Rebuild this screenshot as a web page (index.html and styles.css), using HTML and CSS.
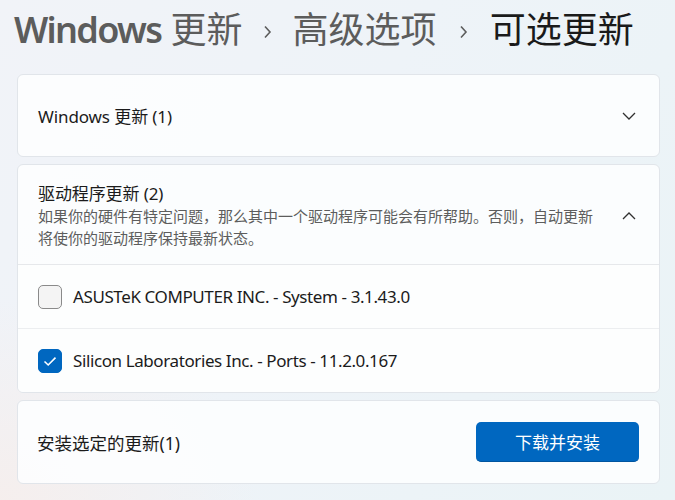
FILE: index.html
```html
<!DOCTYPE html>
<html lang="zh-CN">
<head>
<meta charset="utf-8">
<title>可选更新</title>
<link rel="stylesheet" href="styles.css">
</head>
<body>
<div class="page">
  <h1 class="crumbs">
    <span class="crumb"><span class="latin">Windows</span> 更新</span>
    <svg class="sep" width="9" height="14" viewBox="0 0 9 14"><path d="M2 1.5 L7 7 L2 12.5" fill="none" stroke="#5c5c5c" stroke-width="1.6"/></svg>
    <span class="crumb">高级选项</span>
    <svg class="sep" width="9" height="14" viewBox="0 0 9 14"><path d="M2 1.5 L7 7 L2 12.5" fill="none" stroke="#5c5c5c" stroke-width="1.6"/></svg>
    <span class="crumb current">可选更新</span>
  </h1>

  <div class="cards">
    <section class="card">
      <div class="exp-head single">
        <div class="exp-text">
          <div class="exp-title">Windows 更新 (1)</div>
        </div>
        <svg class="chev" width="14" height="8" viewBox="0 0 14 8"><path d="M1 1 L7 7 L13 1" fill="none" stroke="#303030" stroke-width="1.3"/></svg>
      </div>
    </section>

    <section class="card">
      <div class="exp-head">
        <div class="exp-text">
          <div class="exp-title">驱动程序更新 (2)</div>
          <div class="exp-desc">如果你的硬件有特定问题，那么其中一个驱动程序可能会有所帮助。否则，自动更新<br>将使你的驱动程序保持最新状态。</div>
        </div>
        <svg class="chev" width="14" height="8" viewBox="0 0 14 8"><path d="M1 7 L7 1 L13 7" fill="none" stroke="#303030" stroke-width="1.3"/></svg>
      </div>
      <div class="exp-body">
        <div class="row">
          <span class="cb"></span>
          <span class="row-label">ASUSTeK COMPUTER INC. - System - 3.1.43.0</span>
        </div>
        <div class="row">
          <span class="cb checked"><svg width="24" height="24" viewBox="0 0 24 24"><path d="M6.5 12.5 L10.2 16 L17.5 8.6" fill="none" stroke="#ffffff" stroke-width="1.6"/></svg></span>
          <span class="row-label">Silicon Laboratories Inc. - Ports - 11.2.0.167</span>
        </div>
      </div>
    </section>

    <section class="card action">
      <span class="action-label">安装选定的更新(1)</span>
      <button class="btn-primary">下载并安装</button>
    </section>
  </div>
</div>
</body>
</html>
```

FILE: styles.css
```css
html, body {
  margin: 0;
  padding: 0;
}

body {
  width: 675px;
  height: 500px;
  overflow: hidden;
  font-family: "Segoe UI", "Noto Sans", "Noto Sans CJK SC", sans-serif;
  color: #1b1b1b;
  background:
    radial-gradient(ellipse 260px 200px at 0% 100%, rgba(246, 238, 236, 0.9), rgba(246, 238, 236, 0) 100%),
    linear-gradient(120deg, #f1f3f8 0%, #eef3f8 45%, #eaf3f6 100%);
}

.page {
  padding: 6px 15px 0 17px;
}

.crumbs {
  margin: 0 0 0 -3px;
  height: 48px;
  display: flex;
  align-items: center;
  font-family: "Segoe UI", "Noto Sans", "Noto Sans CJK SC", sans-serif;
  font-size: 36px;
  font-weight: 400;
  line-height: 48px;
  color: #5c5c5c;
  white-space: nowrap;
}

.crumbs .latin {
  font-weight: 600;
  letter-spacing: -1.7px;
}

.crumbs .current {
  color: #1a1a1a;
}

.sep {
  margin: 4px 21px 0 20px;
  flex: none;
}

.sep + .crumb + .sep {
  margin-left: 22px;
  margin-right: 22px;
}

.cards {
  margin-top: 20px;
  display: flex;
  flex-direction: column;
  gap: 7px;
}

.card {
  background: rgba(252, 253, 254, 0.94);
  border: 1px solid #e1e5ea;
  border-radius: 6px;
  overflow: hidden;
}

.exp-head {
  display: flex;
  align-items: center;
  padding: 18px 23px 15px 20px;
}

.exp-head.single {
  height: 81px;
  padding-top: 3px;
  padding-bottom: 0;
  box-sizing: border-box;
}

.exp-head.single .chev {
  margin-top: -3px;
}

.exp-text {
  flex: 1;
}

.exp-title {
  font-size: 17px;
  line-height: 22px;
  letter-spacing: -0.1px;
  color: #1b1b1b;
}

.exp-desc {
  font-size: 15px;
  letter-spacing: 0;
  line-height: 22px;
  color: #5d5d5d;
  white-space: nowrap;
}

.chev {
  flex: none;
}

.exp-body {
  border-top: 1px solid #e6e8eb;
  background: rgba(253, 254, 254, 0.9);
}

.row {
  height: 63px;
  display: flex;
  align-items: center;
  padding-left: 20px;
}

.row + .row {
  border-top: 1px solid #eceef0;
}

.cb {
  width: 24px;
  height: 24px;
  box-sizing: border-box;
  border: 1px solid #8a8a8a;
  border-radius: 5px;
  background: #f4f4f4;
  margin-right: 11px;
  flex: none;
  display: flex;
}

.cb.checked {
  background: #0067c0;
  border-color: #0067c0;
}

.cb.checked svg {
  margin: -1px;
}

.row-label {
  font-size: 17px;
  letter-spacing: -0.4px;
  color: #1b1b1b;
}

.action {
  height: 84px;
  box-sizing: border-box;
  display: flex;
  align-items: center;
  justify-content: space-between;
  padding: 0 20px 0 19px;
}

.action-label {
  font-size: 17.5px;
  color: #1b1b1b;
}

.btn-primary {
  width: 163px;
  height: 40px;
  border: none;
  border-bottom: 1px solid #00559f;
  border-radius: 5px;
  background: #0067c0;
  color: #ffffff;
  font-family: "Segoe UI", "Noto Sans", "Noto Sans CJK SC", sans-serif;
  font-size: 17px;
  padding: 0;
}
```
